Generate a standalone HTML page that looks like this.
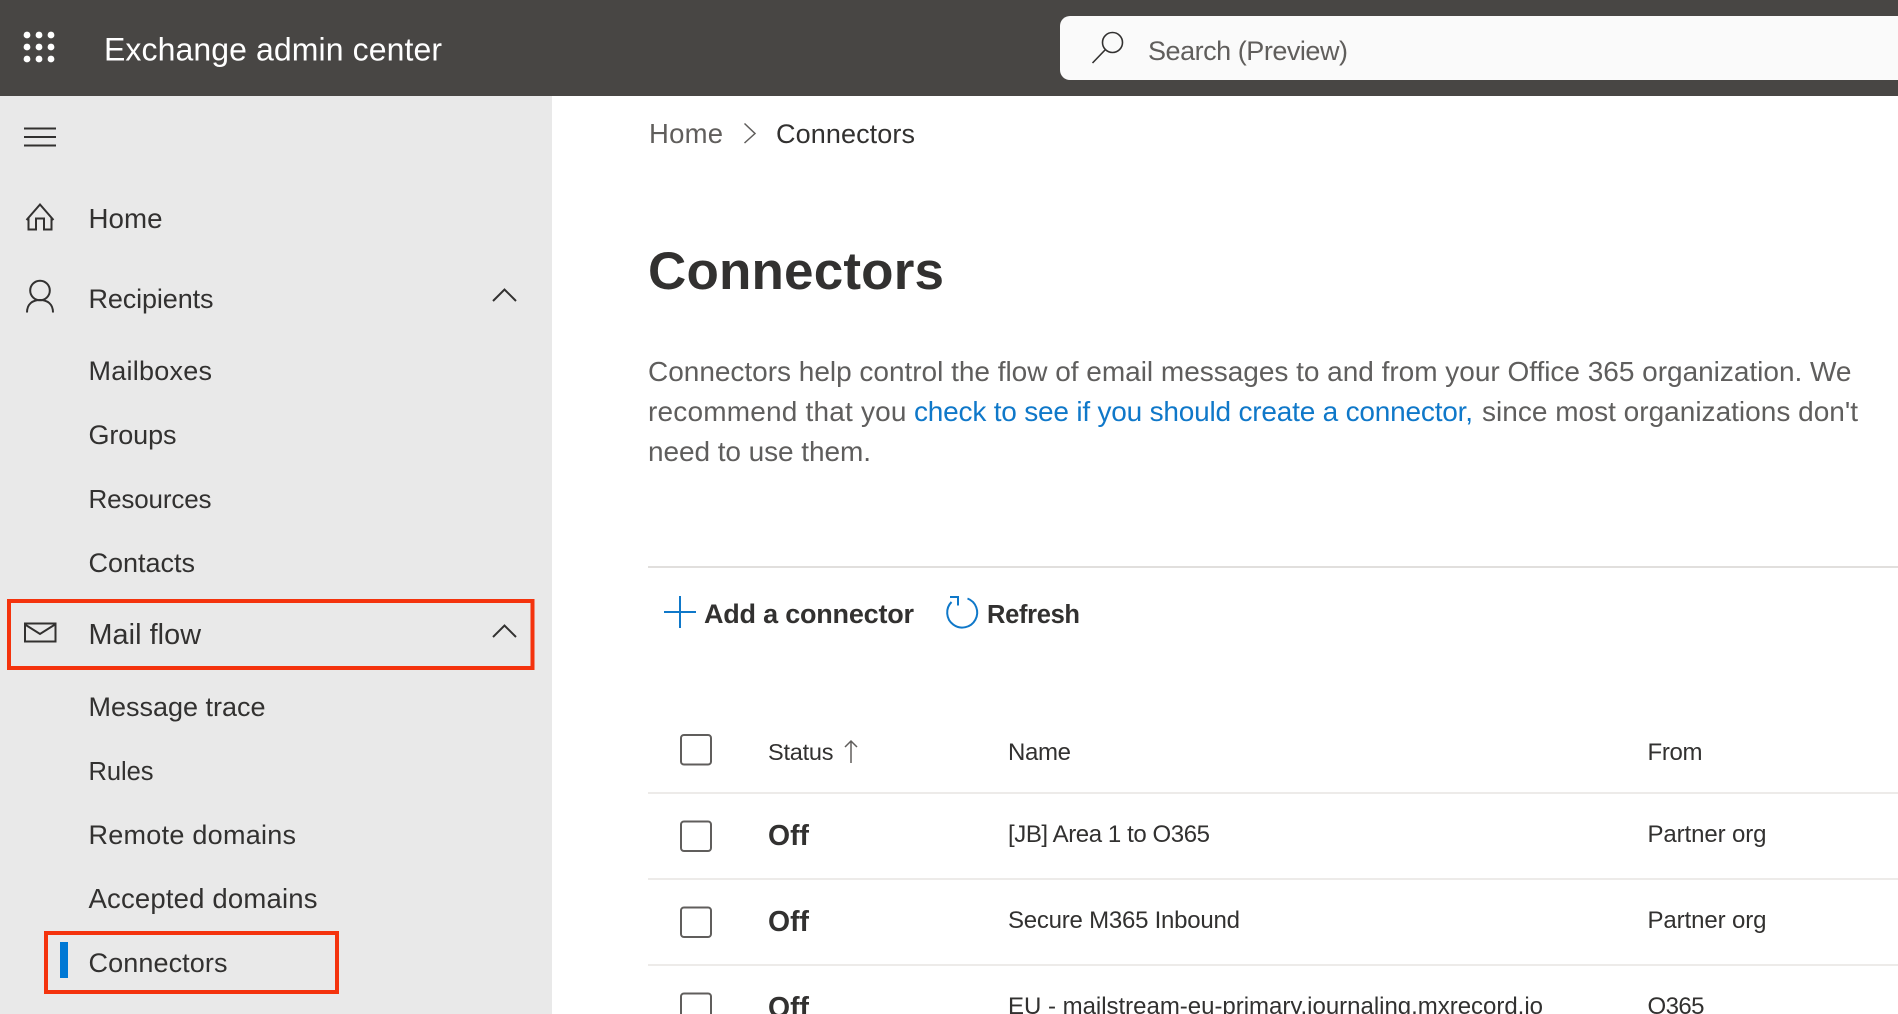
<!DOCTYPE html>
<html lang="en"><head><meta charset="utf-8"><title>Exchange admin center</title>
<style>
html,body{margin:0;padding:0;width:1898px;height:1014px;overflow:hidden;background:#fff}
svg{display:block}
text{font-family:"Liberation Sans",sans-serif;white-space:pre}
.n{font-size:27px;fill:#323130}
.p{font-size:28px;fill:#5f5e5d}
.l{font-size:28px;fill:#0f78c9}
.t{font-size:24px;fill:#323130}
.b{font-weight:bold}
.i{fill:none;stroke:#323130;stroke-width:2}
.c{fill:none;stroke:#605e5c;stroke-width:2}
</style></head><body>
<svg width="1898" height="1014" viewBox="0 0 1898 1014" xmlns="http://www.w3.org/2000/svg">
<rect width="1898" height="1014" fill="#fff"/>
<rect width="1898" height="96" fill="#484644"/>
<rect y="96" width="552" height="918" fill="#e9e9e9"/>
<g fill="#fff"><circle cx="27" cy="35" r="3.4"/><circle cx="39" cy="35" r="3.4"/><circle cx="51" cy="35" r="3.4"/><circle cx="27" cy="47" r="3.4"/><circle cx="39" cy="47" r="3.4"/><circle cx="51" cy="47" r="3.4"/><circle cx="27" cy="59" r="3.4"/><circle cx="39" cy="59" r="3.4"/><circle cx="51" cy="59" r="3.4"/></g>
<text x="104" y="60.5" font-size="32" fill="#fff" textLength="338" lengthAdjust="spacing">Exchange admin center</text>
<path d="M1070 16H1898V80H1070A10 10 0 0 1 1060 70V26A10 10 0 0 1 1070 16Z" fill="#fafafa"/>
<circle cx="1112.5" cy="42.5" r="10" fill="none" stroke="#323130" stroke-width="1.6"/>
<path d="M1105 50L1092.5 63" fill="none" stroke="#323130" stroke-width="1.6"/>
<text x="1148" y="60" font-size="27" fill="#605e5c" textLength="200" lengthAdjust="spacing">Search (Preview)</text>

<path class="i" d="M24 128.500H56M24 137H56M24 145.500H56"/>
<path class="i" d="M26.500 220L40 204.500L53.500 220M28.500 217.500V229.500H36V218.500H44V229.500H51.500V217.500"/>
<text class="n" style="font-size:27.700px" x="88.500" y="228" textLength="74" lengthAdjust="spacing">Home</text>
<circle class="i" cx="40" cy="290.500" r="9.800"/>
<path class="i" d="M27 312.500C27 304 32.500 300 40 300C47.500 300 53 304 53 312.500"/>
<text class="n" x="88.500" y="308" textLength="125" lengthAdjust="spacing">Recipients</text>
<path class="i" d="M493 301L504.500 289.500L516 301"/>
<text class="n" x="88.500" y="380" textLength="123.500" lengthAdjust="spacing">Mailboxes</text>
<text class="n" x="88.500" y="444" textLength="88" lengthAdjust="spacing">Groups</text>
<text class="n" style="font-size:26px" x="88.500" y="508" textLength="123" lengthAdjust="spacing">Resources</text>
<text class="n" x="88.500" y="572" textLength="106.500" lengthAdjust="spacing">Contacts</text>
<rect x="25" y="623.500" width="30.500" height="18" class="i"/>
<path class="i" d="M25 624.500L40 634L55 624.500"/>
<text class="n" style="font-size:28.800px" x="88.500" y="644" textLength="112.500" lengthAdjust="spacing">Mail flow</text>
<path class="i" d="M493 637L504.500 625.500L516 637"/>
<text class="n" x="88.500" y="716" textLength="177" lengthAdjust="spacing">Message trace</text>
<text class="n" style="font-size:25.500px" x="88.500" y="780" textLength="65" lengthAdjust="spacing">Rules</text>
<text class="n" x="88.500" y="844" textLength="207.500" lengthAdjust="spacing">Remote domains</text>
<text class="n" style="font-size:27.500px" x="88.500" y="908" textLength="229" lengthAdjust="spacing">Accepted domains</text>
<text class="n" x="88.500" y="972" textLength="139" lengthAdjust="spacing">Connectors</text>
<rect x="60" y="942" width="8" height="36" fill="#0078d4"/>
<rect x="9" y="601" width="523.500" height="67" fill="none" stroke="#f4330d" stroke-width="4"/>
<rect x="46" y="933" width="291" height="59" fill="none" stroke="#f4330d" stroke-width="4"/>

<text x="649" y="143" font-size="27.500" fill="#605e5c" textLength="74" lengthAdjust="spacing">Home</text>
<path d="M744.500 123.500L755 133.500L744.500 143" fill="none" stroke="#605e5c" stroke-width="1.500"/>
<text class="n" x="776" y="143" textLength="139" lengthAdjust="spacing">Connectors</text>
<text class="b" x="648" y="289" font-size="53" fill="#323130" textLength="296" lengthAdjust="spacing">Connectors</text>

<text class="p" x="648" y="381" textLength="1203.500" lengthAdjust="spacing">Connectors help control the flow of email messages to and from your Office 365 organization. We</text>
<text class="p" x="648" y="421" textLength="258.500" lengthAdjust="spacing">recommend that you</text>
<text class="l" x="914" y="421" textLength="559" lengthAdjust="spacing">check to see if you should create a connector,</text>
<text class="p" x="1482" y="421" textLength="376" lengthAdjust="spacing">since most organizations don't</text>
<text class="p" x="648" y="461" textLength="223" lengthAdjust="spacing">need to use them.</text>

<rect x="648" y="566" width="1250" height="2" fill="#e1dfdd"/>
<path d="M664 612H696M680 596V628" fill="none" stroke="#0f78c9" stroke-width="2"/>
<text class="b" x="704" y="623" font-size="27" fill="#323130" textLength="210" lengthAdjust="spacing">Add a connector</text>
<path d="M967.500 598.500A15 15 0 1 1 951.500 602M950 597H958V605.500" fill="none" stroke="#0f78c9" stroke-width="2"/>
<text class="b" x="987" y="623" font-size="25.500" fill="#323130" textLength="93" lengthAdjust="spacing">Refresh</text>

<rect class="c" x="681" y="735" width="30" height="29.500" rx="3"/>
<text class="t" style="font-size:23.500px" x="768" y="760" textLength="65.500" lengthAdjust="spacing">Status</text>
<path d="M851 763V741M845 747L851 741L857 747" fill="none" stroke="#605e5c" stroke-width="1.500"/>
<text class="t" x="1008" y="760" textLength="63" lengthAdjust="spacing">Name</text>
<text class="t" x="1647.500" y="760" textLength="55" lengthAdjust="spacing">From</text>
<rect x="648" y="792" width="1250" height="2" fill="#edebe9"/>

<rect class="c" x="681" y="821.500" width="30" height="29.500" rx="3"/>
<text class="b" x="768" y="845" font-size="28.400" fill="#323130" textLength="41" lengthAdjust="spacing">Off</text>
<text class="t" x="1008" y="842" textLength="202" lengthAdjust="spacing">[JB] Area 1 to O365</text>
<text class="t" x="1647.500" y="842" textLength="119" lengthAdjust="spacing">Partner org</text>
<rect x="648" y="878" width="1250" height="2" fill="#edebe9"/>

<rect class="c" x="681" y="907.500" width="30" height="29.500" rx="3"/>
<text class="b" x="768" y="931" font-size="28.400" fill="#323130" textLength="41" lengthAdjust="spacing">Off</text>
<text class="t" x="1008" y="928" textLength="232" lengthAdjust="spacing">Secure M365 Inbound</text>
<text class="t" x="1647.500" y="928" textLength="119" lengthAdjust="spacing">Partner org</text>
<rect x="648" y="964" width="1250" height="2" fill="#edebe9"/>

<rect class="c" x="681" y="993.500" width="30" height="29.500" rx="3"/>
<text class="b" x="768" y="1017" font-size="28.400" fill="#323130" textLength="41" lengthAdjust="spacing">Off</text>
<text class="t" x="1008" y="1014" textLength="535" lengthAdjust="spacing">EU - mailstream-eu-primary.journaling.mxrecord.io</text>
<text class="t" x="1647.500" y="1014" textLength="57" lengthAdjust="spacing">O365</text>
</svg>
</body></html>
